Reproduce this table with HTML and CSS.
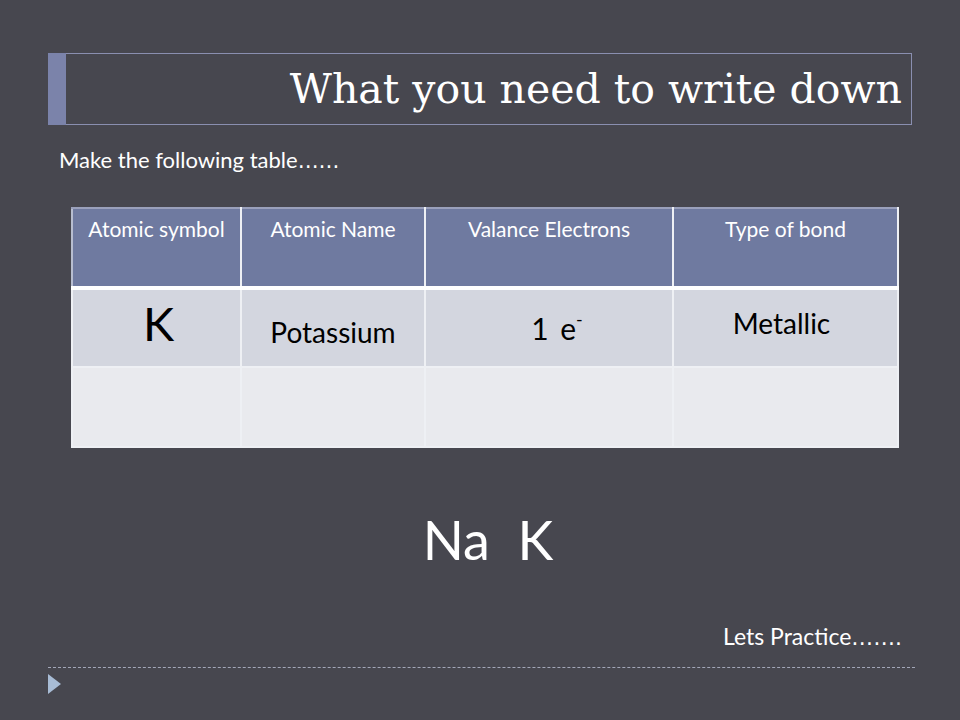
FILE: index.html
```html
<!DOCTYPE html>
<html>
<head>
<meta charset="utf-8">
<link rel="stylesheet" href="styles.css">
</head>
<body>
<div class="slide">
  <div class="title-row">
    <div class="accent"></div>
    <div class="title-box"><h1 class="title">What you need to write down</h1></div>
  </div>
  <p class="intro">Make the following table<span class="dots">……</span></p>
  <table class="chart">
    <colgroup>
      <col class="c1"><col class="c2"><col class="c3"><col class="c4">
    </colgroup>
    <tr class="head">
      <th>Atomic symbol</th>
      <th>Atomic Name</th>
      <th>Valance Electrons</th>
      <th>Type of bond</th>
    </tr>
    <tr class="row1">
      <td class="sym">K</td>
      <td class="name">Potassium</td>
      <td class="val">1 e<sup>-</sup></td>
      <td class="bond">Metallic</td>
    </tr>
    <tr class="row2">
      <td></td><td></td><td></td><td></td>
    </tr>
  </table>
  <p class="elements">Na&nbsp; K</p>
  <p class="practice">Lets Practice<span class="dots">…….</span></p>
  <div class="footer">
    <div class="dash"></div>
    <svg class="arrow" width="14" height="22" viewBox="0 0 14 22"><polygon points="0,0 13,10 0,20" fill="#a8bcd5"/></svg>
  </div>
</div>
</body>
</html>
```

FILE: styles.css
```css
html, body {
  margin: 0;
  padding: 0;
  background: #47474f;
}
.slide {
  width: 960px;
  height: 720px;
  background: #47474f;
  font-family: "Lato", "Open Sans", sans-serif;
  color: #ffffff;
  overflow: hidden;
}
.title-row {
  display: flex;
  margin: 53px 48px 0 48px;
  height: 72px;
}
.accent {
  width: 18px;
  background: #7b83aa;
}
.title-box {
  flex: 1;
  border: 1px solid #8a8fb0;
  border-left: none;
  display: flex;
  align-items: center;
  justify-content: flex-end;
  padding-right: 9px;
}
.title {
  margin: 0;
  font-family: "DejaVu Serif", "Liberation Serif", serif;
  font-weight: normal;
  font-size: 41px;
  line-height: 48px;
  color: #ffffff;
}
.intro {
  margin: 22px 0 0 59px;
  font-size: 22px;
  line-height: 26px;
}
.dots {
  font-family: "DejaVu Sans", sans-serif;
  font-size: 0.95em;
}
.chart {
  margin: 33px 0 0 71px;
  width: 826px;
  border-collapse: collapse;
  table-layout: fixed;
  color: #000;
}
.c1 { width: 169px; }
.c2 { width: 184px; }
.c3 { width: 248px; }
.c4 { width: 225px; }
.chart th, .chart td {
  border: 2px solid #eef0f4;
  padding: 0;
  text-align: center;
  vertical-align: top;
  box-sizing: border-box;
}
.chart th {
  background: #6f7aa0;
  color: #fff;
  font-weight: normal;
  font-size: 21px;
  line-height: 26px;
  height: 80px;
  padding-top: 7px;
  border-bottom: 4px solid #ffffff;
  border-top-color: #9aa0bb;
  border-left-color: #b7bdd0;
}
.row1 td {
  background: #d3d6df;
  height: 79px;
}
.row2 td {
  background: #e9eaee;
  height: 80px;
}
.sym {
  font-size: 47px;
  line-height: 50px;
  padding-top: 8px !important;
  padding-left: 4px !important;
}
.name {
  font-size: 28px;
  line-height: 32px;
  padding-top: 26px !important;
}
.val {
  font-size: 30px;
  line-height: 34px;
  padding-top: 21px !important;
  word-spacing: 4px;
  padding-left: 16px !important;
}
.val sup {
  font-size: 18px;
  line-height: 0;
  vertical-align: 14px;
}
.bond {
  font-size: 28px;
  line-height: 32px;
  padding-top: 17px !important;
  padding-right: 8px !important;
}
.elements {
  margin: 62px 0 0 0;
  text-align: center;
  font-size: 54px;
  line-height: 60px;
  padding-left: 16px;
}
.practice {
  margin: 52px 58px 0 0;
  text-align: right;
  font-size: 23px;
  line-height: 28px;
}
.footer {
  margin: 15px 45px 0 48px;
}
.dash {
  height: 0;
  border-top: 1px dashed #a3a7b8;
}
.arrow {
  display: block;
  margin-top: 6px;
}
```
